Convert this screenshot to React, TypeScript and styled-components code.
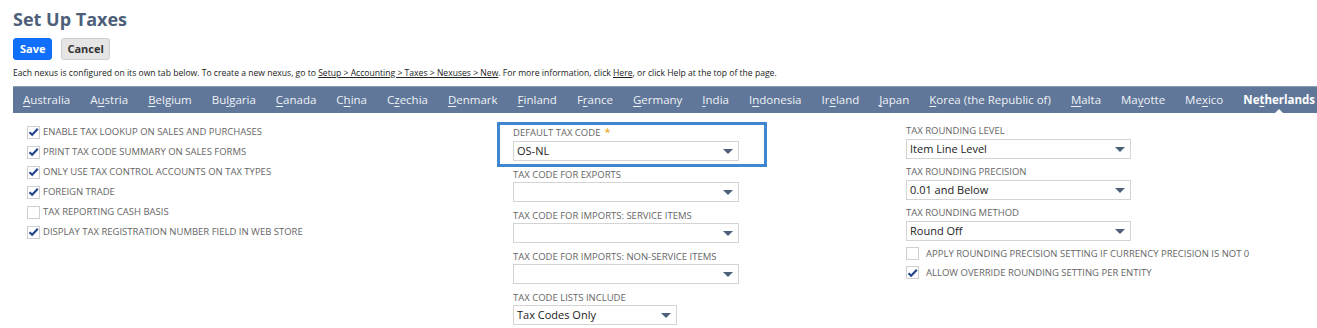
import React from "react";
import styled, { createGlobalStyle } from "styled-components";

const GlobalStyle = createGlobalStyle`
  html, body { margin: 0; padding: 0; background: #ffffff; }
  body { font-family: "Open Sans", "Liberation Sans", Arial, sans-serif; color: #333; }
  * { box-sizing: border-box; }
`;

const Page = styled.div`
  padding: 7px 0 0 13px;
  width: 1317px;
  height: 328px;
  overflow: hidden;
`;

const Title = styled.h1`
  margin: 0;
  font-size: 18px;
  line-height: 24px;
  font-weight: 700;
  color: #4d5f79;
`;

const ButtonRow = styled.div`
  display: flex;
  gap: 9px;
  margin-top: 7px;
`;

const Button = styled.button<{ $primary?: boolean }>`
  height: 22px;
  padding: 0 ${(p) => (p.$primary ? "6px" : "5px")};
  border-radius: 3px;
  font-family: "Open Sans", "Liberation Sans", Arial, sans-serif;
  font-size: 11px;
  font-weight: 700;
  line-height: 20px;
  cursor: pointer;
  border: 1px solid ${(p) => (p.$primary ? "#0f6cf0" : "#cfcfcf")};
  background: ${(p) => (p.$primary ? "#1170fb" : "#e5e5e5")};
  color: ${(p) => (p.$primary ? "#ffffff" : "#333333")};
`;

const Info = styled.p`
  margin: 6px 0 0 0;
  font-size: 8.6px;
  line-height: 14px;
  color: #222;
`;

const Link = styled.a`
  color: #222;
  text-decoration: underline;
`;

const TabBar = styled.div`
  margin-top: 6px;
  height: 27px;
  background: #607799;
  border-top: 1px solid #8ea0b8;
  display: flex;
  align-items: center;
  white-space: nowrap;
`;

const Tab = styled.span<{ $active?: boolean }>`
  position: relative;
  padding: 0 10px;
  font-size: 11.5px;
  line-height: 26px;
  color: ${(p) => (p.$active ? "#ffffff" : "#eef2f7")};
  font-weight: ${(p) => (p.$active ? 700 : 400)};
  u { text-decoration: underline; text-underline-offset: 2px; }
  ${(p) =>
    p.$active
      ? `&::after {
    content: "";
    position: absolute;
    left: 50%;
    bottom: -1px;
    margin-left: -5px;
    border-left: 5px solid transparent;
    border-right: 5px solid transparent;
    border-bottom: 5px solid #ffffff;
  }`
      : ""}
`;

const Content = styled.div`
  display: grid;
  grid-template-columns: 484px 409px 1fr;
`;

const LeftCol = styled.div`
  padding: 9px 0 0 14px;
`;

const MidCol = styled.div`
  padding-top: 9px;
`;

const RightCol = styled.div`
  padding-top: 11px;
`;

const CheckGroup = styled.div`
  margin-top: -3px;
`;

const CheckRow = styled.div<{ $gap?: number; $h?: number }>`
  display: flex;
  align-items: center;
  height: ${(p) => p.$h ?? 20}px;
  gap: ${(p) => p.$gap ?? 3}px;
`;

const Box = styled.span`
  width: 13px;
  height: 13px;
  border: 1px solid #d0d0d0;
  background: #fff;
  display: flex;
  align-items: center;
  justify-content: center;
  flex: none;
`;

const CheckLabel = styled.span`
  font-size: 9.5px;
  line-height: 14px;
  color: #666;
  text-transform: uppercase;
`;

const FieldWrap = styled.div<{ $highlight?: boolean }>`
  width: ${(p) => (p.$highlight ? "270px" : "auto")};
  padding: ${(p) => (p.$highlight ? "0 0 3px 13px" : "0 0 0 16px")};
  border: ${(p) => (p.$highlight ? "3px solid #3f87d0" : "none")};
  margin-bottom: ${(p) => (p.$highlight ? "1px" : "7px")};
`;

const RightField = styled.div`
  margin-bottom: 6px;
`;

const FieldLabel = styled.div<{ $mb?: number }>`
  font-size: 9.5px;
  line-height: 14px;
  color: #666;
  text-transform: uppercase;
  margin-bottom: ${(p) => p.$mb ?? 0}px;
`;

const Req = styled.span`
  color: #e9a000;
  margin-left: 4px;
  font-size: 11px;
`;

const Select = styled.div<{ $w: number }>`
  position: relative;
  width: ${(p) => p.$w}px;
  height: 20px;
  border: 1px solid #d4d4d4;
  background: #fff;
  font-size: 11px;
  line-height: 18px;
  color: #222;
  padding-left: 3px;
  &::after {
    content: "";
    position: absolute;
    right: 5px;
    top: 7px;
    border-left: 5.5px solid transparent;
    border-right: 5.5px solid transparent;
    border-top: 5px solid #4d6079;
  }
`;

const Check = ({ on }: { on: boolean }) => (
  <Box>
    {on && (
      <svg width="11" height="10" viewBox="0 0 11 10">
        <path d="M1.5 5.2 L4.2 7.8 L9.8 1.8" fill="none" stroke="#23468c" strokeWidth="2.2" />
      </svg>
    )}
  </Box>
);

const tabs: [string, number][] = [
  ["Australia", 0],
  ["Austria", 1],
  ["Belgium", 0],
  ["Bulgaria", 2],
  ["Canada", 0],
  ["China", 1],
  ["Czechia", 1],
  ["Denmark", 0],
  ["Finland", 0],
  ["France", 1],
  ["Germany", 0],
  ["India", 0],
  ["Indonesia", 1],
  ["Ireland", 2],
  ["Japan", 0],
  ["Korea (the Republic of)", 0],
  ["Malta", 0],
  ["Mayotte", 2],
  ["Mexico", 2],
  ["Netherlands", 2],
];

const leftChecks: [string, boolean][] = [
  ["Enable Tax Lookup on Sales and Purchases", true],
  ["Print Tax Code Summary on Sales Forms", true],
  ["Only Use Tax Control Accounts on Tax Types", true],
  ["Foreign Trade", true],
  ["Tax Reporting Cash Basis", false],
  ["Display Tax Registration Number Field in Web Store", true],
];

const midFields: { label: string; value: string; w: number }[] = [
  { label: "Tax Code for Exports", value: "", w: 226 },
  { label: "Tax Code for Imports: Service Items", value: "", w: 226 },
  { label: "Tax Code for Imports: Non-Service Items", value: "", w: 226 },
  { label: "Tax Code Lists Include", value: "Tax Codes Only", w: 164 },
];

const rightFields: { label: string; value: string }[] = [
  { label: "Tax Rounding Level", value: "Item Line Level" },
  { label: "Tax Rounding Precision", value: "0.01 and Below" },
  { label: "Tax Rounding Method", value: "Round Off" },
];

const rightChecks: [string, boolean][] = [
  ["Apply Rounding Precision Setting if Currency Precision is not 0", false],
  ["Allow Override Rounding Setting per Entity", true],
];

export default function App() {
  return (
    <>
      <GlobalStyle />
      <Page>
        <Title>Set Up Taxes</Title>
        <ButtonRow>
          <Button $primary>Save</Button>
          <Button>Cancel</Button>
        </ButtonRow>
        <Info>
          Each nexus is configured on its own tab below. To create a new nexus, go to{" "}
          <Link>Setup &gt; Accounting &gt; Taxes &gt; Nexuses &gt; New</Link>. For more information, click{" "}
          <Link>Here</Link>, or click Help at the top of the page.
        </Info>
        <TabBar>
          {tabs.map(([name, k], i) => (
            <Tab key={name} $active={i === tabs.length - 1}>
              {name.slice(0, k)}
              <u>{name[k]}</u>
              {name.slice(k + 1)}
            </Tab>
          ))}
        </TabBar>
        <Content>
          <LeftCol>
            {leftChecks.map(([label, on]) => (
              <CheckRow key={label}>
                <Check on={on} />
                <CheckLabel>{label}</CheckLabel>
              </CheckRow>
            ))}
          </LeftCol>
          <MidCol>
            <FieldWrap $highlight>
              <FieldLabel $mb={1}>
                Default Tax Code<Req>*</Req>
              </FieldLabel>
              <Select $w={226}>OS-NL</Select>
            </FieldWrap>
            {midFields.map((f) => (
              <FieldWrap key={f.label}>
                <FieldLabel>{f.label}</FieldLabel>
                <Select $w={f.w}>{f.value}</Select>
              </FieldWrap>
            ))}
          </MidCol>
          <RightCol>
            {rightFields.map((f) => (
              <RightField key={f.label}>
                <FieldLabel $mb={1}>{f.label}</FieldLabel>
                <Select $w={225}>{f.value}</Select>
              </RightField>
            ))}
            <CheckGroup>
              {rightChecks.map(([label, on]) => (
                <CheckRow key={label} $gap={7} $h={19}>
                  <Check on={on} />
                  <CheckLabel>{label}</CheckLabel>
                </CheckRow>
              ))}
            </CheckGroup>
          </RightCol>
        </Content>
      </Page>
    </>
  );
}
